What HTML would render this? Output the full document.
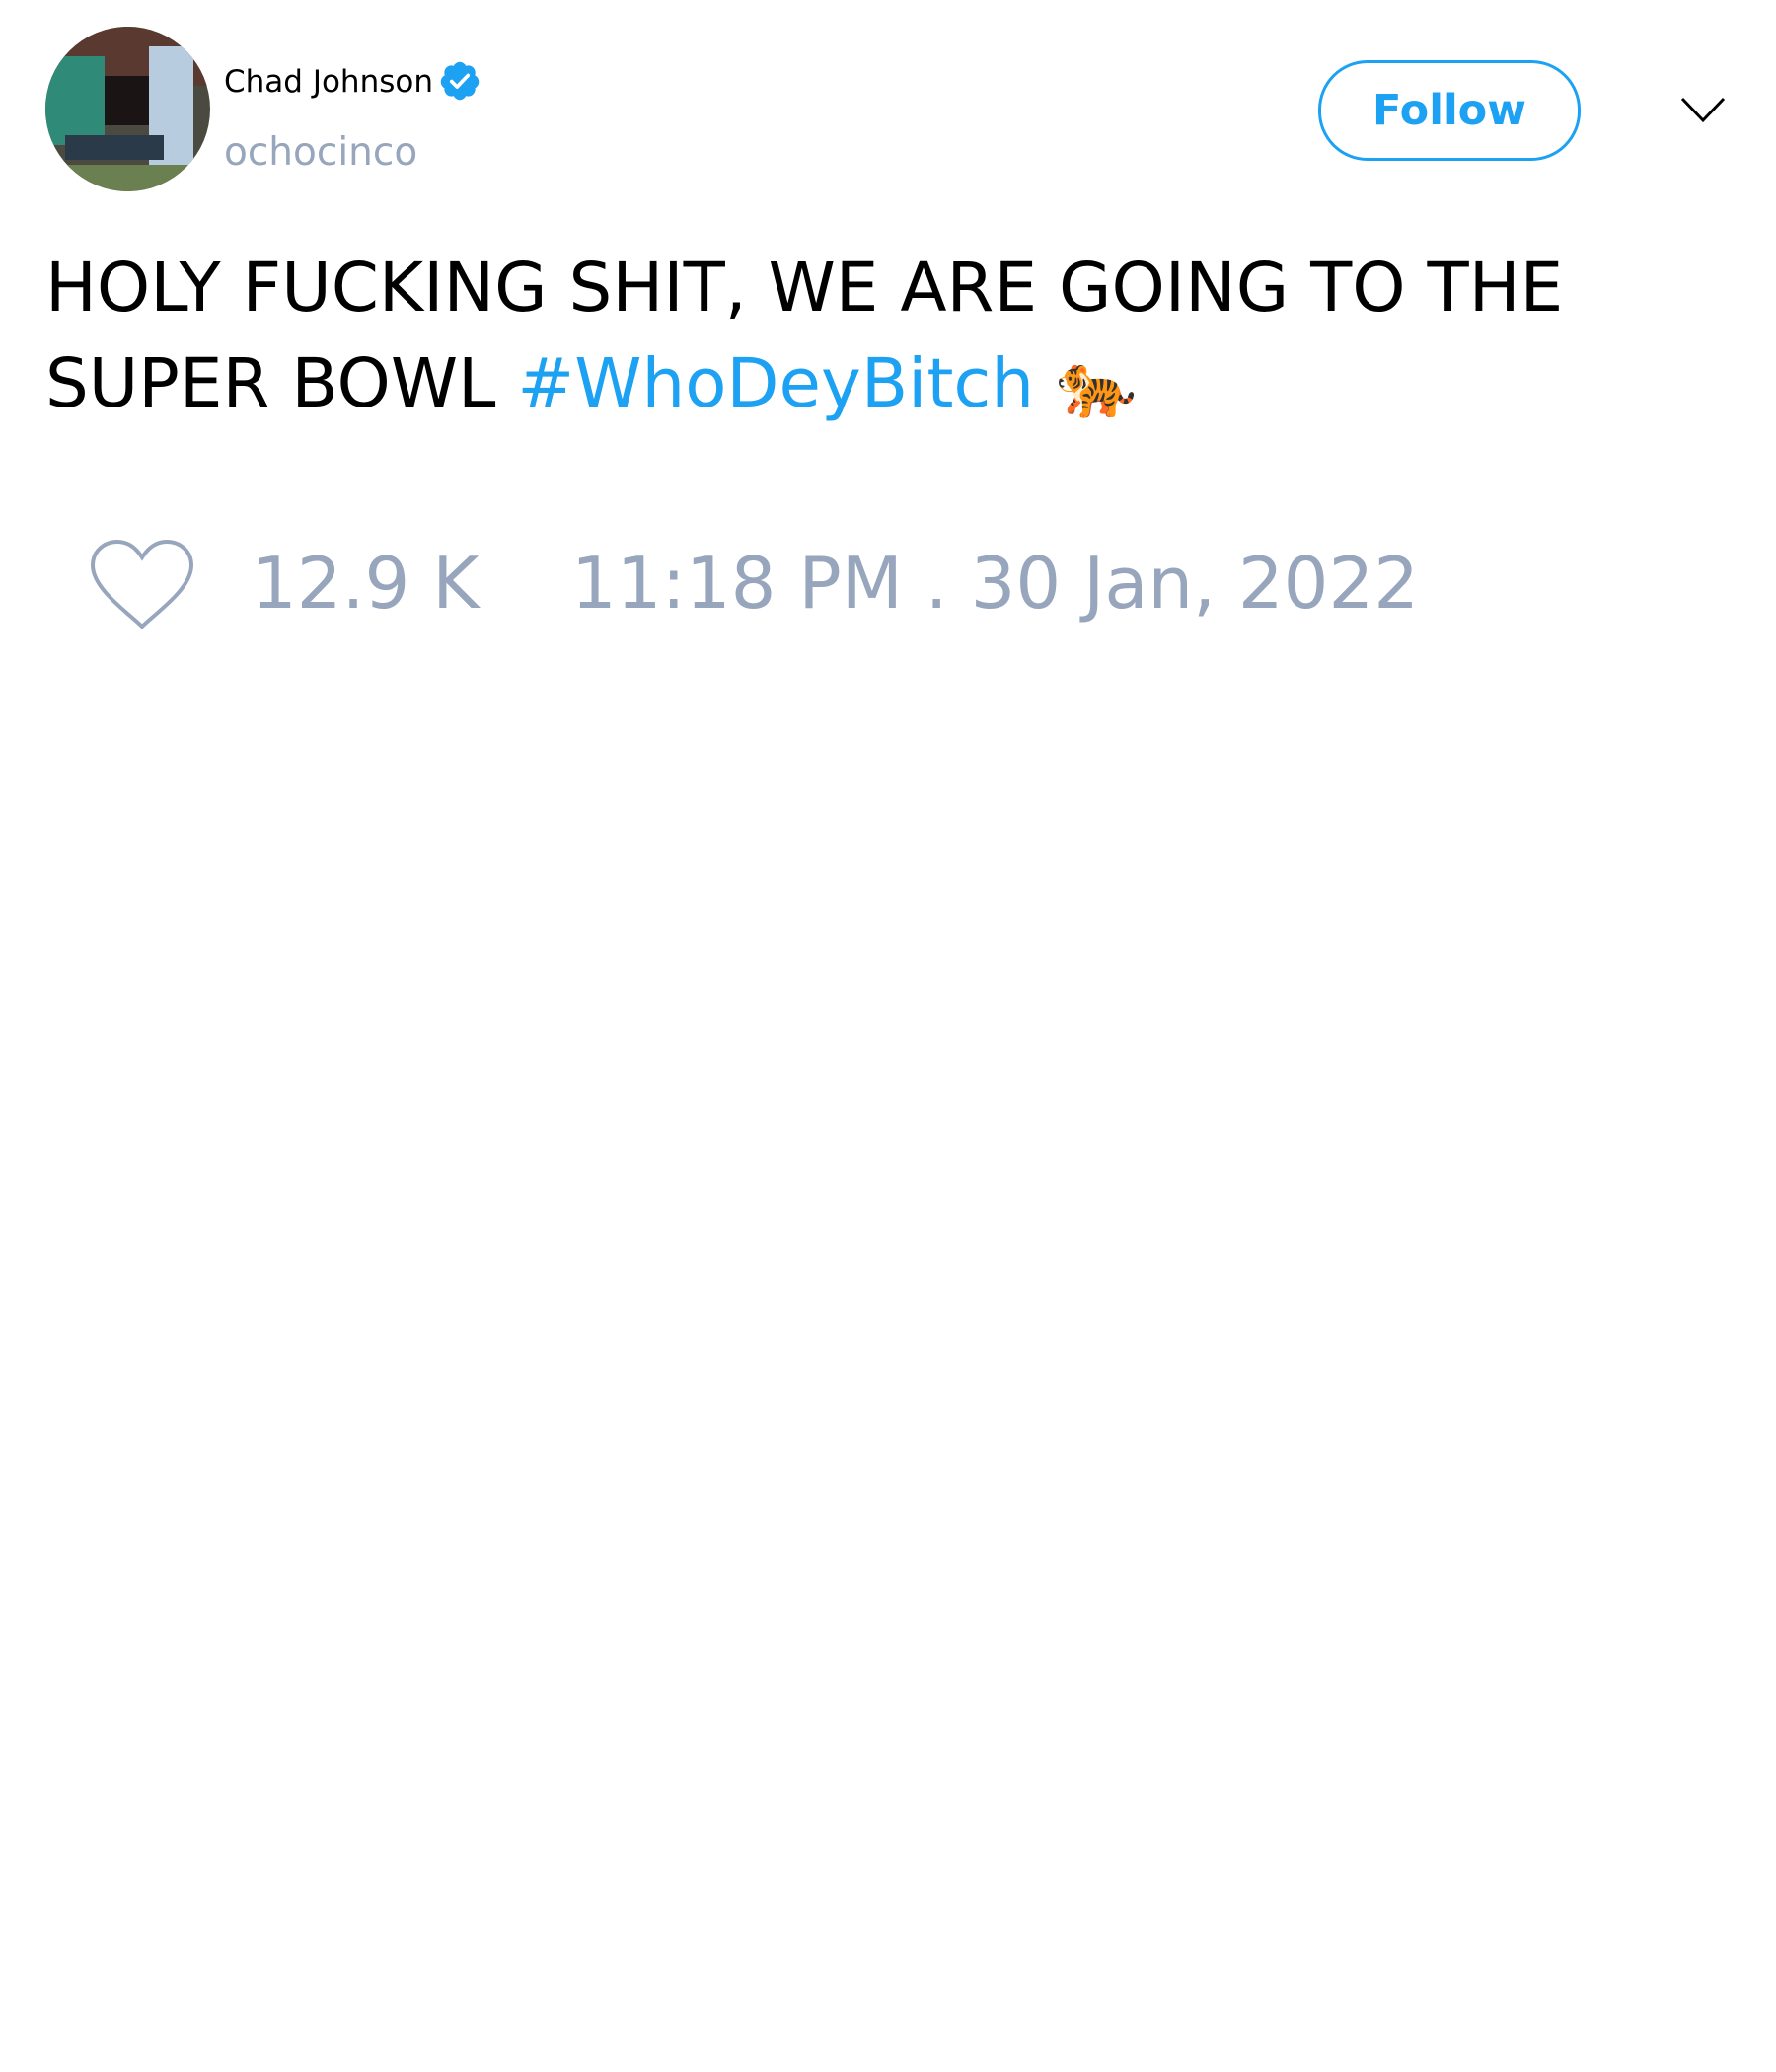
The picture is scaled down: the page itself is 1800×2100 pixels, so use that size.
<!DOCTYPE html>
<html><head><meta charset="utf-8"><style>
body{margin:0;width:1800px;height:2100px;background:#fff;font-family:"DejaVu Sans","Liberation Sans",sans-serif;position:relative;overflow:hidden}
.a{position:absolute;white-space:nowrap}
</style></head><body>
<div class="a" style="left:46px;top:27px;width:167px;height:167px;border-radius:50%;overflow:hidden;background:#4a4a40">
<div class="a" style="left:0;top:0;width:167px;height:60px;background:#5a3a30"></div>
<div class="a" style="left:0;top:30px;width:60px;height:90px;background:#2f8a78"></div>
<div class="a" style="left:60px;top:50px;width:60px;height:50px;background:#1a1414"></div>
<div class="a" style="left:105px;top:20px;width:45px;height:140px;background:#b8cce0"></div>
<div class="a" style="left:20px;top:110px;width:100px;height:25px;background:#2a3a48"></div>
<div class="a" style="left:0;top:140px;width:167px;height:30px;background:#6a8050"></div>
</div>
<div class="a" style="left:227px;top:65px;font-size:31px;color:#000">Chad Johnson</div>
<svg class="a" style="left:444px;top:60px" width="44" height="44" viewBox="0 0 24 24"><path fill="#1da1f2" d="M22.5 12.5c0-1.58-.88-2.950-2.16-3.6.15-.44.23-.91.23-1.4 0-2.21-1.71-4-3.82-4-.47 0-.92.08-1.340.25C14.770 2.52 13.48 1.5 12 1.5s-2.77 1.02-3.4 2.25c-.42-.17-.88-.25-1.35-.25-2.1 0-3.8 1.79-3.8 4 0 .49.08.96.23 1.4-1.28.65-2.18 2.020-2.18 3.6 0 1.5.81 2.8 2 3.47-.02.17-.03.35-.03.53 0 2.21 1.71 4 3.81 4 .47 0 .92-.09 1.34-.25.62 1.24 1.91 2.25 3.38 2.25 1.48 0 2.77-1.01 3.39-2.25.42.16.87.25 1.34.25 2.11 0 3.82-1.79 3.820-4 0-.18-.01-.36-.04-.53 1.19-.67 2-1.97 2-3.47z"/><path d="M7.5 12.3l3 3 6-6.3" stroke="#fff" stroke-width="2" fill="none" stroke-linecap="round" stroke-linejoin="round"/></svg>
<div class="a" style="left:227px;top:132px;font-size:39px;color:#97a6bc">ochocinco</div>
<div class="a" style="left:1336px;top:61px;width:260px;height:96px;border:3px solid #1da1f2;border-radius:50px;color:#1da1f2;font-weight:bold;font-size:43px;text-align:center;line-height:96px">Follow</div>
<svg class="a" style="left:1703px;top:96px" width="46" height="30" viewBox="0 0 46 30"><path d="M2 4L23 26L44 4" stroke="#000" stroke-width="3" fill="none"/></svg>
<div class="a" style="left:46px;top:244px;font-size:69px;line-height:97px;color:#000">HOLY FUCKING SHIT, WE ARE GOING TO THE<br>SUPER BOWL <span style="color:#1da1f2">#WhoDeyBitch</span> <span style="font-family:'Noto Color Emoji',sans-serif;font-size:66px">🐅</span></div>
<svg class="a" style="left:90px;top:545px" width="108" height="94" viewBox="0 0 108 94"><path d="M54 90C40 76 4 52 4 28 4 14 15 4 29 4c12 0 20 8 25 16 5-8 13-16 25-16 14 0 25 10 25 24 0 24-36 48-50 62z" fill="none" stroke="#97a6bc" stroke-width="4"/></svg>
<div class="a" style="left:255px;top:549px;font-size:72px;color:#97a6bc">12.9 K</div>
<div class="a" style="left:579px;top:549px;font-size:72px;color:#97a6bc">11:18 PM . 30 Jan, 2022</div>
</body></html>
